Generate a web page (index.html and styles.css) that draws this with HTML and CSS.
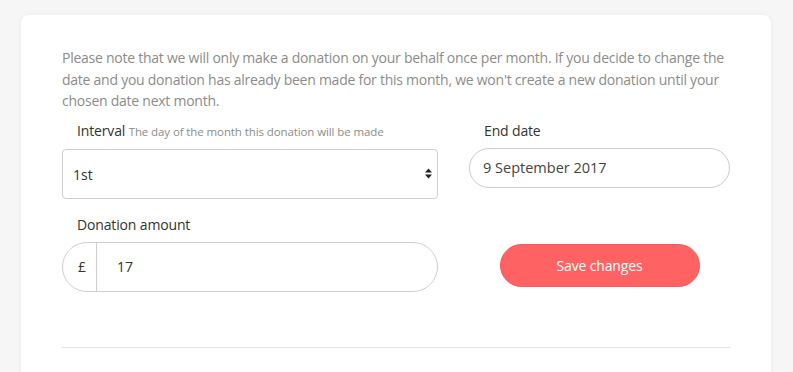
FILE: index.html
```html
<!DOCTYPE html>
<html lang="en">
<head>
<meta charset="utf-8">
<title>Donation settings</title>
<link rel="stylesheet" href="styles.css">
</head>
<body>
<div class="page">
  <div class="card">
    <p class="note">Please note that we will only make a donation on your behalf once per month. If you decide to change the date and you donation has already been made for this month, we won't create a new donation until your chosen date next month.</p>
    <div class="form-grid">
      <div class="field">
        <label class="label">Interval <span class="hint">The day of the month this donation will be made</span></label>
        <div class="select">
          <span class="select-value">1st</span>
          <svg class="select-arrows" width="7" height="11" viewBox="0 0 7 11"><path d="M3.5 0.5L7 4.5H0Z" fill="#222"/><path d="M3.5 10.5L7 6.5H0Z" fill="#222"/></svg>
        </div>
      </div>
      <div class="field">
        <label class="label">End date</label>
        <div class="date-input">9 September 2017</div>
      </div>
      <div class="field">
        <label class="label">Donation amount</label>
        <div class="amount-input">
          <span class="currency">£</span>
          <span class="amount-value">17</span>
        </div>
      </div>
      <div class="button-cell">
        <button class="save-btn">Save changes</button>
      </div>
    </div>
    <hr class="divider">
  </div>
</div>
</body>
</html>
```

FILE: styles.css
```css
* { box-sizing: border-box; }
html, body {
  margin: 0;
  padding: 0;
  background: #f6f6f6;
  font-family: "Open Sans", "Liberation Sans", sans-serif;
}
.page {
  padding: 15px 22px 0 21px;
  height: 372px;
  overflow: hidden;
}
.card {
  background: #fff;
  border-radius: 8px;
  box-shadow: 0 0 6px rgba(0,0,0,0.05);
  padding: 32px 41px 60px 41px;
  min-height: 400px;
}
.note {
  margin: 0;
  font-size: 14px;
  line-height: 21.5px;
  letter-spacing: -0.25px;
  color: #8c8c8c;
}
.form-grid {
  display: grid;
  grid-template-columns: 376px 1fr;
  column-gap: 31px;
  row-gap: 16px;
  margin-top: 9px;
}
.field {
  display: flex;
  flex-direction: column;
}
.label {
  display: block;
  padding-left: 15px;
  font-size: 14px;
  line-height: 20px;
  color: #333;
  margin-bottom: 7px;
  letter-spacing: -0.15px;
}
.hint {
  font-size: 11.5px;
  color: #8c8c8c;
  letter-spacing: -0.1px;
}
.select {
  height: 50px;
  border: 1px solid #cfcfcf;
  border-radius: 4px;
  display: flex;
  align-items: center;
  justify-content: space-between;
  padding: 0 5px 0 10px;
  font-size: 14px;
  color: #333;
}
.select-value { padding-top: 2px; }
.date-input {
  height: 40px;
  border: 1px solid #c9ced1;
  border-radius: 20px;
  display: flex;
  align-items: center;
  padding-left: 13px;
  font-size: 14.5px;
  color: #444;
}
.amount-input {
  height: 50px;
  border: 1px solid #cfcfcf;
  border-radius: 25px;
  display: flex;
  align-items: stretch;
  font-size: 14px;
  color: #333;
}
.currency {
  width: 34px;
  border-right: 1px solid #cfcfcf;
  display: flex;
  align-items: center;
  justify-content: flex-end;
  padding-right: 10px;
}
.amount-value {
  display: flex;
  align-items: center;
  padding-left: 20px;
}
.button-cell {
  display: flex;
  justify-content: center;
  align-items: flex-end;
  padding-bottom: 5px;
}
.save-btn {
  width: 200px;
  height: 43px;
  border: 1px solid #f85858;
  border-radius: 22px;
  background: #ff6262;
  color: #fff;
  font-family: "Open Sans", "Liberation Sans", sans-serif;
  font-size: 14px;
  letter-spacing: -0.15px;
  padding: 0;
}
.divider {
  margin: 55px 0 0 0;
  border: 0;
  border-top: 1px solid #e3e3e3;
  height: 0;
}
```
